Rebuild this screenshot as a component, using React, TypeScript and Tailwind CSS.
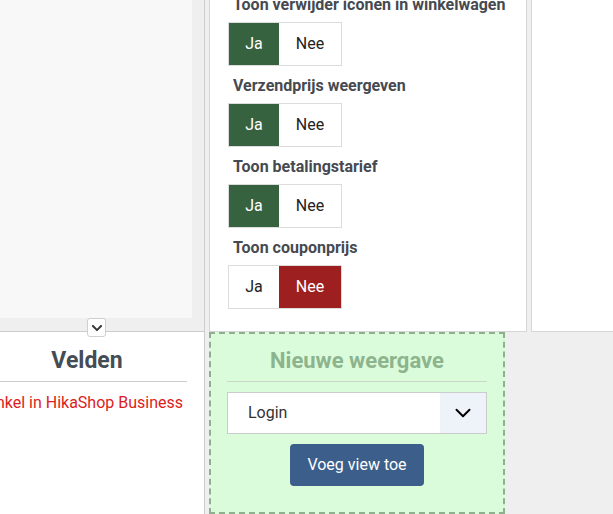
import React, { useState } from "react";
import { FaChevronDown } from "react-icons/fa";
import { ChevronDown } from "lucide-react";

type Option = { label: string; value: boolean };

const OPTIONS: Option[] = [
  { label: "Toon verwijder iconen in winkelwagen", value: true },
  { label: "Verzendprijs weergeven", value: true },
  { label: "Toon betalingstarief", value: true },
  { label: "Toon couponprijs", value: false },
];

function YesNo({ value, onChange }: { value: boolean; onChange: (v: boolean) => void }) {
  return (
    <div className="flex w-fit border border-[#dcdcdc] text-[16px] leading-none">
      <button
        onClick={() => onChange(true)}
        className={
          value
            ? "w-[50px] h-[42px] bg-[#37623f] text-white"
            : "w-[50px] h-[42px] bg-white text-[#222]"
        }
      >
        Ja
      </button>
      <button
        onClick={() => onChange(false)}
        className={
          !value
            ? "w-[62px] h-[42px] bg-[#9e1f1f] text-white"
            : "w-[62px] h-[42px] bg-white text-[#222]"
        }
      >
        Nee
      </button>
    </div>
  );
}

export default function App() {
  const [opts, setOpts] = useState(OPTIONS);

  return (
    <div className="w-[613px] h-[514px] overflow-hidden bg-[#efefef] font-['Roboto',sans-serif] flex">
      {/* left column */}
      <div className="w-[205px] flex flex-col border-r border-[#cccccc] shrink-0">
        <div className="relative h-[332px] border-b border-[#cccccc] shrink-0">
          <div className="w-[192px] h-[318px] bg-[#f8f8f8]" />
          {/* collapse toggle sitting on the divider */}
          <button className="absolute left-[87px] top-[318px] w-[19px] h-[19px] flex items-center justify-center bg-white border border-[#cfcfcf] rounded-[3px] text-[#333]">
            <FaChevronDown size={12} />
          </button>
        </div>
        <div className="flex-1 bg-white overflow-hidden">
          <div className="-ml-[13px] w-[200px]">
            <h2 className="pt-[15px] pb-[6px] text-center text-[23px] leading-[28px] font-bold text-[#444c55] border-b border-[#cccccc]">
              Velden
            </h2>
            <div className="mt-[9px] pr-[4px] flex justify-end whitespace-nowrap text-[16px] leading-[24px] text-[#dd1c1c]">
              Alleen beschikbaar voor de winkel in HikaShop Business
            </div>
          </div>
        </div>
      </div>

      {/* middle column */}
      <div className="ml-[4px] w-[318px] flex flex-col shrink-0">
        <div className="h-[332px] shrink-0 bg-white border-x border-b border-[#d6d6d6] flex flex-col justify-end px-[18px] pb-[22px] overflow-hidden">
          {opts.map((o, i) => (
            <div key={o.label}>
              <div className="pl-[5px] mt-[10px] mb-[7px] text-[16px] leading-[20px] font-bold text-[#464a50] whitespace-nowrap">
                {o.label}
              </div>
              <YesNo
                value={o.value}
                onChange={(v) => setOpts(opts.map((x, j) => (j === i ? { ...x, value: v } : x)))}
              />
            </div>
          ))}
        </div>
        <div className="w-[296px] flex-1 bg-[#dbfcdb] border-2 border-dashed border-[#8fb08f] px-[16px]">
          <h2 className="pt-[14px] pb-[7px] text-center text-[22px] leading-[26px] font-bold text-[#8db48d] border-b border-[#c9d6c9]">
            Nieuwe weergave
          </h2>
          <div className="mt-[10px] h-[42px] flex bg-white border border-[#cccccc]">
            <div className="flex-1 pl-[20px] flex items-center text-[16px] text-[#333]">Login</div>
            <div className="w-[46px] bg-[#eef2f9] flex items-center justify-center text-black">
              <ChevronDown size={26} strokeWidth={1.8} />
            </div>
          </div>
          <div className="mt-[10px] flex justify-center">
            <button className="w-[134px] h-[42px] rounded-[4px] bg-[#3c5e8b] text-white text-[16px]">
              Voeg view toe
            </button>
          </div>
        </div>
      </div>

      {/* right column */}
      <div className="ml-[4px] flex-1">
        <div className="h-[332px] bg-white border-l border-b border-[#d6d6d6]" />
      </div>
    </div>
  );
}
